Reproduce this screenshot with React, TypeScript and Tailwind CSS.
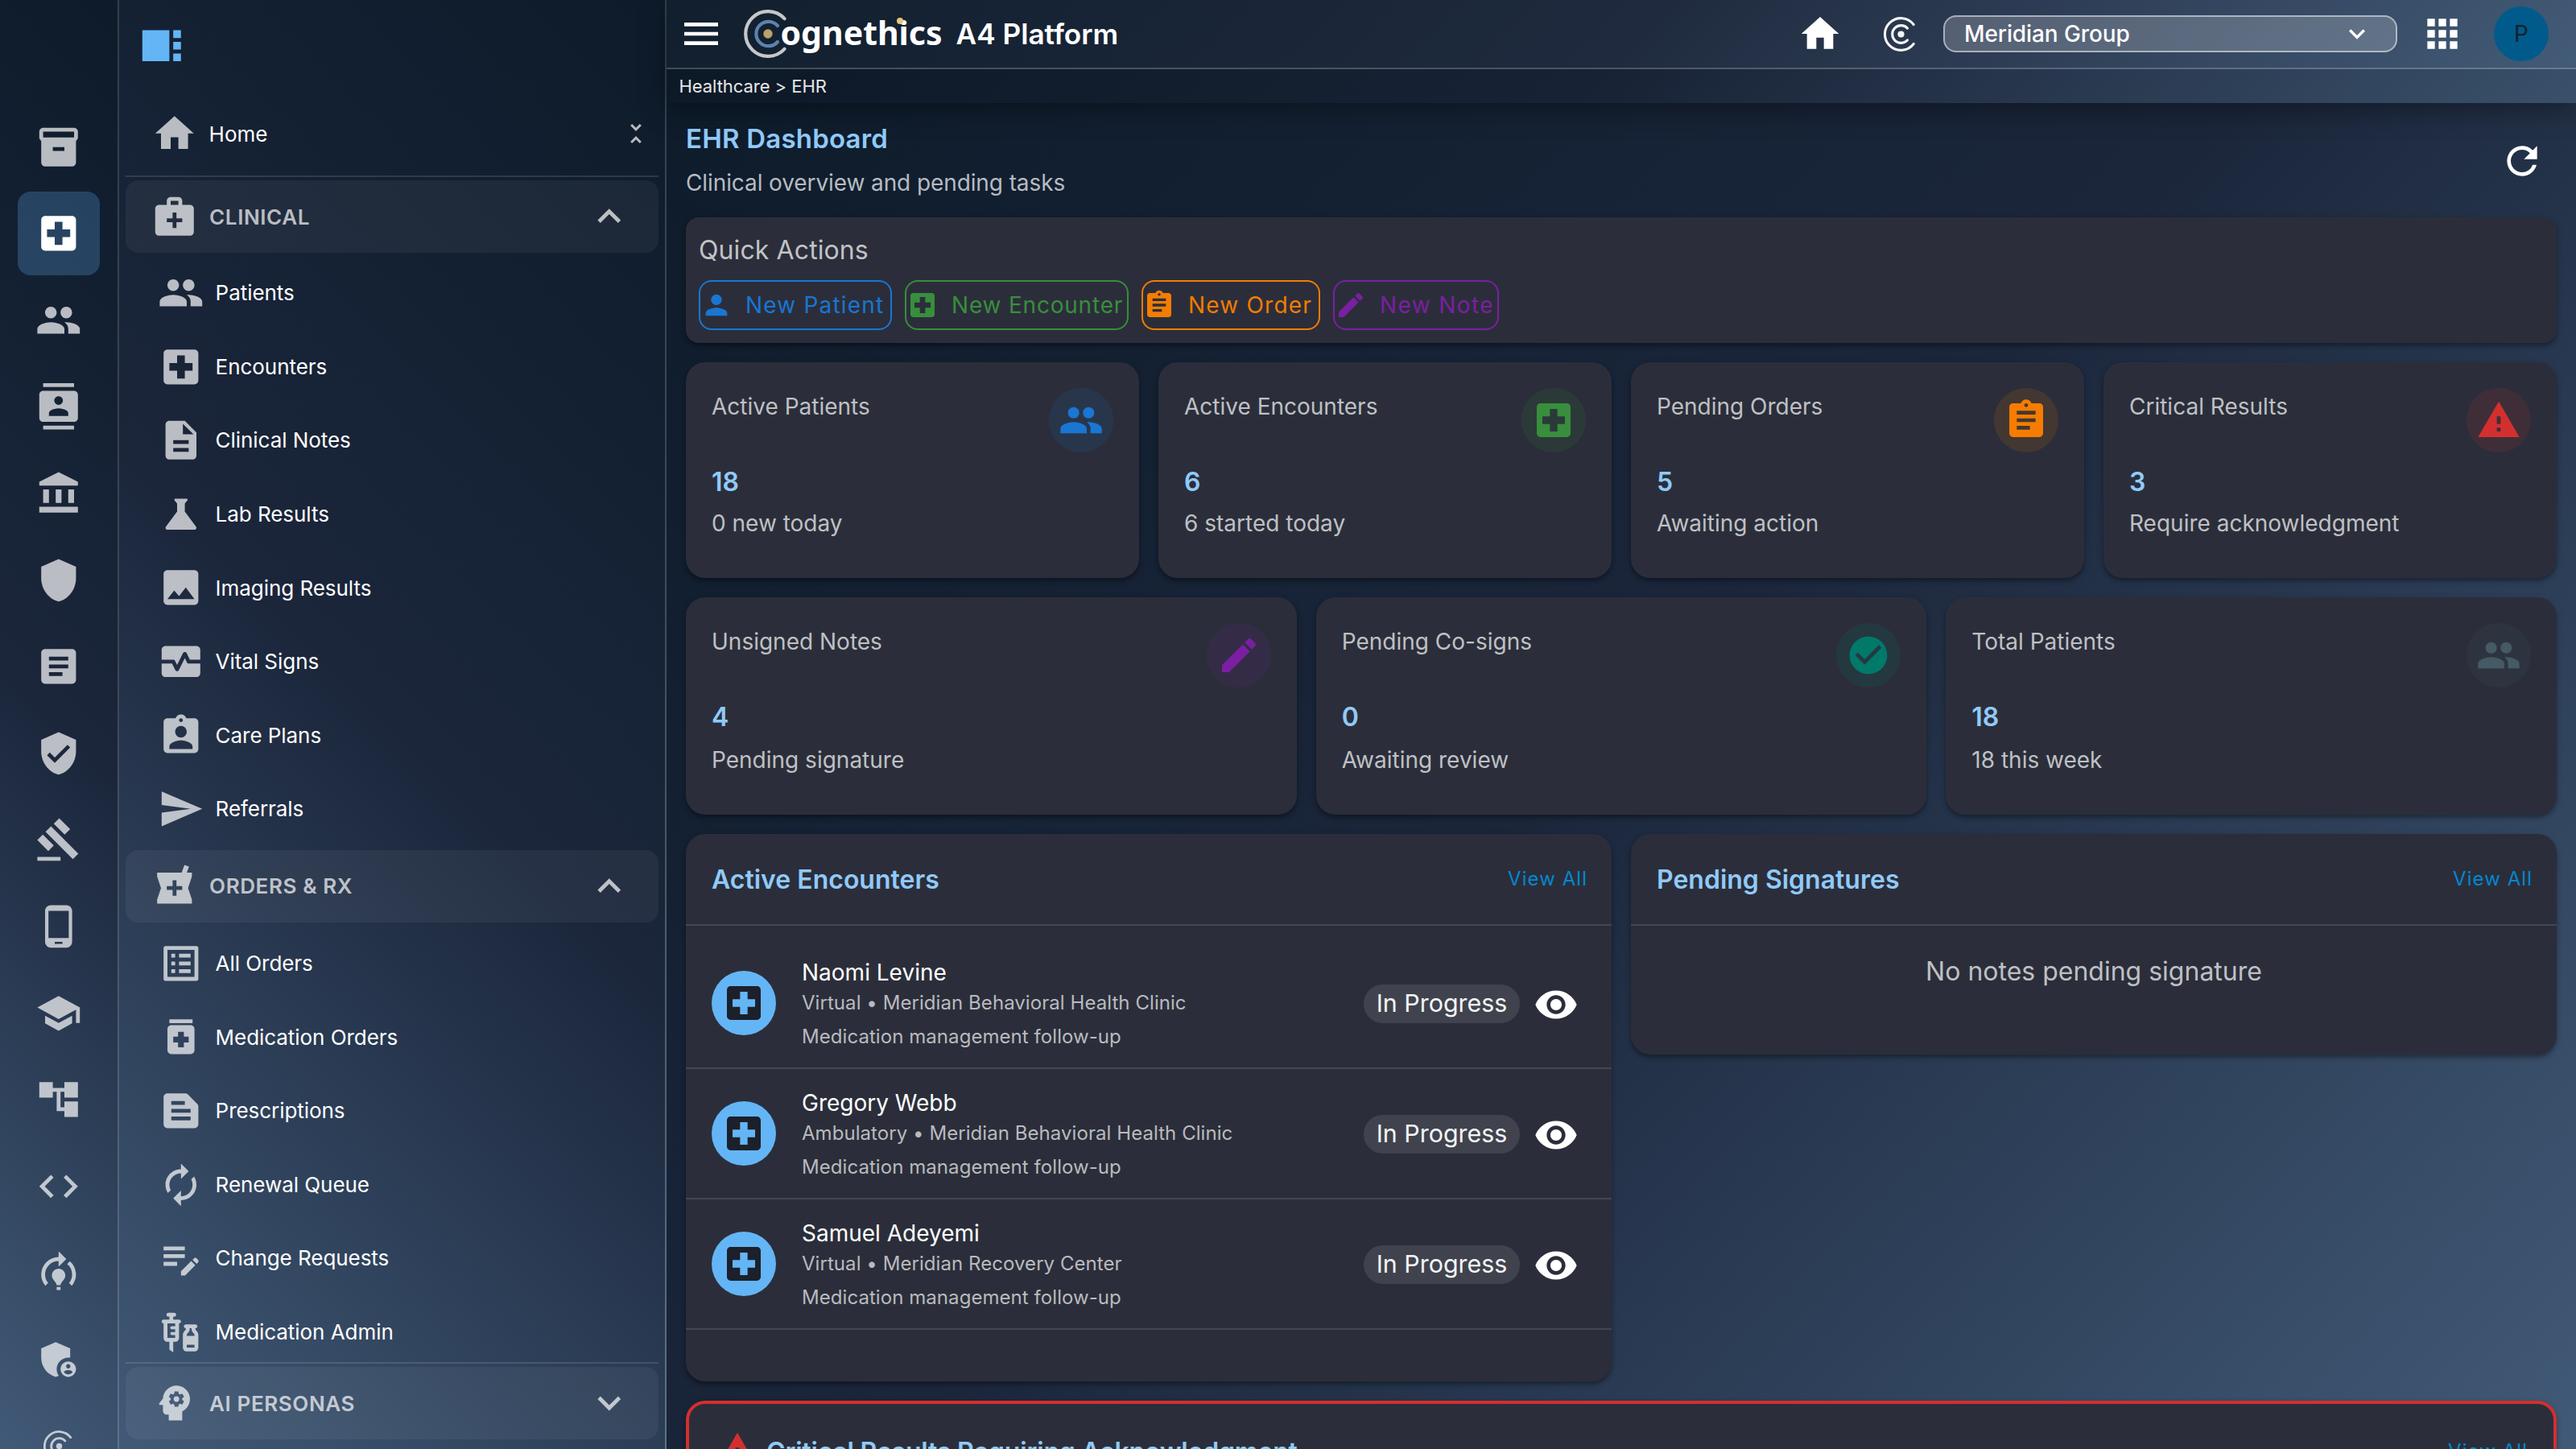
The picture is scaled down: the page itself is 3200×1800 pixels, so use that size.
import type { ReactNode } from "react";
import type { IconType } from "react-icons";
import {
  MdAccountBalance,
  MdAccountTree,
  MdAdminPanelSettings,
  MdApps,
  MdArticle,
  MdAssignment,
  MdAssignmentInd,
  MdAutorenew,
  MdCheckCircle,
  MdCode,
  MdContacts,
  MdDescription,
  MdEdit,
  MdEditNote,
  MdExpandLess,
  MdExpandMore,
  MdGavel,
  MdHome,
  MdImage,
  MdInventory2,
  MdListAlt,
  MdLocalHospital,
  MdLocalPharmacy,
  MdMedicalServices,
  MdMedication,
  MdMenu,
  MdModelTraining,
  MdMonitorHeart,
  MdPeople,
  MdPerson,
  MdPhoneAndroid,
  MdPsychology,
  MdRefresh,
  MdSchool,
  MdScience,
  MdSend,
  MdShield,
  MdTextSnippet,
  MdUnfoldLess,
  MdVaccines,
  MdVerifiedUser,
  MdViewSidebar,
  MdVisibility,
  MdWarning,
} from "react-icons/md";

// ----- Data -----

const RAIL_ICONS: IconType[] = [
  MdInventory2,
  MdLocalHospital,
  MdPeople,
  MdContacts,
  MdAccountBalance,
  MdShield,
  MdArticle,
  MdVerifiedUser,
  MdGavel,
  MdPhoneAndroid,
  MdSchool,
  MdAccountTree,
  MdCode,
  MdModelTraining,
  MdAdminPanelSettings,
];

const CLINICAL: { label: string; icon: IconType }[] = [
  { label: "Patients", icon: MdPeople },
  { label: "Encounters", icon: MdLocalHospital },
  { label: "Clinical Notes", icon: MdDescription },
  { label: "Lab Results", icon: MdScience },
  { label: "Imaging Results", icon: MdImage },
  { label: "Vital Signs", icon: MdMonitorHeart },
  { label: "Care Plans", icon: MdAssignmentInd },
  { label: "Referrals", icon: MdSend },
];

const ORDERS: { label: string; icon: IconType }[] = [
  { label: "All Orders", icon: MdListAlt },
  { label: "Medication Orders", icon: MdMedication },
  { label: "Prescriptions", icon: MdTextSnippet },
  { label: "Renewal Queue", icon: MdAutorenew },
  { label: "Change Requests", icon: MdEditNote },
  { label: "Medication Admin", icon: MdVaccines },
];

const ACTIONS = [
  { label: "New Patient", icon: MdPerson, tone: "w-[240px] border-[#1976d2] text-[#1976d2] tracking-[1.2px]" },
  { label: "New Encounter", icon: MdLocalHospital, tone: "w-[278px] border-[#388e3c] text-[#388e3c] tracking-[0.8px]" },
  { label: "New Order", icon: MdAssignment, tone: "w-[222px] border-[#f57c00] text-[#f57c00] tracking-[1.2px]" },
  { label: "New Note", icon: MdEdit, tone: "w-[206px] border-[#7b1fa2] text-[#7b1fa2] tracking-[1.4px]" },
];

const STATS_TOP = [
  { label: "Active Patients", value: "18", note: "0 new today", icon: MdPeople, tone: "bg-[#1976d2]/12 text-[#1976d2]" },
  { label: "Active Encounters", value: "6", note: "6 started today", icon: MdLocalHospital, tone: "bg-[#388e3c]/12 text-[#388e3c]" },
  { label: "Pending Orders", value: "5", note: "Awaiting action", icon: MdAssignment, tone: "bg-[#f57c00]/12 text-[#f57c00]" },
  { label: "Critical Results", value: "3", note: "Require acknowledgment", icon: MdWarning, tone: "bg-[#d32f2f]/12 text-[#d32f2f]" },
];

const STATS_BOTTOM = [
  { label: "Unsigned Notes", value: "4", note: "Pending signature", icon: MdEdit, tone: "bg-[#7b1fa2]/12 text-[#7b1fa2]" },
  { label: "Pending Co-signs", value: "0", note: "Awaiting review", icon: MdCheckCircle, tone: "bg-[#00796b]/14 text-[#00796b]" },
  { label: "Total Patients", value: "18", note: "18 this week", icon: MdPeople, tone: "bg-[#455a64]/14 text-[#455a64]" },
];

const ENCOUNTERS = [
  { name: "Naomi Levine", place: "Virtual • Meridian Behavioral Health Clinic" },
  { name: "Gregory Webb", place: "Ambulatory • Meridian Behavioral Health Clinic" },
  { name: "Samuel Adeyemi", place: "Virtual • Meridian Recovery Center" },
];

// ----- Brand marks -----

// Two nested open rings round a dot.
function RingsIcon({ className }: { className: string }) {
  return (
    <svg viewBox="0 0 42 42" className={className} fill="none" stroke="currentColor" strokeWidth="3" strokeLinecap="round">
      <path d="M36.3 9.3A19.4 19.4 0 1 0 36.3 32.7" />
      <path d="M28.9 13.9A10.6 10.6 0 1 0 28.9 28.1" />
      <circle cx="21" cy="21" r="4" fill="currentColor" stroke="none" />
    </svg>
  );
}

function Logo() {
  return (
    <div className="flex h-[60px] items-center">
      <svg viewBox="0 0 60 60" className="size-[60px]" fill="none" strokeWidth="4.2" strokeLinecap="round">
        <path d="M50.5 11.2A27.8 27.8 0 1 0 50.5 48.8" stroke="#c6c7ca" />
        <path d="M42 20A15.2 15.2 0 1 0 42 40" stroke="#5b83ad" />
        <circle cx="30" cy="30" r="5.7" fill="#b9a36c" />
      </svg>
      <span className="relative -mt-[4px] -ml-[14.5px] font-['Noto_Sans'] text-[41px] leading-[60px] font-bold text-white">
        ognethics
        <span className="absolute top-[12px] left-[144px] size-[8px] rounded-full bg-[#e9c77b]" />
      </span>
    </div>
  );
}

// ----- Navigation -----

function Rail() {
  return (
    <nav className="flex w-[148px] shrink-0 flex-col items-center overflow-hidden border-r-2 border-white/15 bg-[linear-gradient(225deg,#0d1b2a_0%,#1b263b_50%,#415a77_100%)] pt-[130.6px]">
      {RAIL_ICONS.map((Icon, i) => (
        <div
          key={i}
          className={
            i === 1
              ? "mb-1 flex h-[103.6px] w-[102px] shrink-0 items-center justify-center rounded-2xl bg-[#64b5f6]/25 text-white"
              : "mb-1 flex h-[103.6px] w-[102px] shrink-0 items-center justify-center text-white/70"
          }
        >
          <Icon className="size-[57.6px]" />
        </div>
      ))}
      <div className="flex h-[103.6px] shrink-0 items-center justify-center text-white/70">
        <RingsIcon className="size-[39px]" />
      </div>
    </nav>
  );
}

function SectionHeader({ label, icon: Icon, open }: { label: string; icon: IconType; open: boolean }) {
  const Chevron = open ? MdExpandLess : MdExpandMore;
  return (
    <div className="flex h-[90px] shrink-0 items-center rounded-2xl bg-white/5 px-8 text-white/70">
      <Icon className="size-[57.6px]" />
      <span className="ml-[14.5px] flex-1 text-[26px] font-semibold tracking-[0.6px]">{label}</span>
      <Chevron className="size-[57.6px]" />
    </div>
  );
}

function NavItem({ label, icon: Icon }: { label: string; icon: IconType }) {
  return (
    <div className="flex h-[91.6px] shrink-0 items-center pl-10 text-white">
      <Icon className="size-[57.6px] text-white/70" />
      <span className="ml-[14px] text-[26px] tracking-[-0.05px]">{label}</span>
    </div>
  );
}

function Sidebar() {
  return (
    <aside className="flex w-[680px] shrink-0 flex-col border-r-2 border-white/15 bg-[linear-gradient(225deg,#0d1b2a_0%,#1b263b_50%,#415a77_100%)] px-2 pb-[12px]">
      <div className="flex h-[114px] shrink-0 items-center pl-4">
        <MdViewSidebar className="size-[57.6px] text-[#64b5f6]" />
      </div>
      <div className="flex h-[104px] shrink-0 items-center pr-2.5 pl-8">
        <MdHome className="size-[57.6px] text-white/70" />
        <span className="ml-[14px] flex-1 text-[26px] text-white">Home</span>
        <MdUnfoldLess className="size-9 text-white/70" />
      </div>
      <div className="h-0.5 shrink-0 bg-white/12" />
      <div className="flex min-h-0 flex-1 flex-col overflow-hidden pt-1">
        <SectionHeader label="CLINICAL" icon={MdMedicalServices} open />
        <div className="flex shrink-0 flex-col pt-1 pb-[5px]">
          {CLINICAL.map((item) => (
            <NavItem key={item.label} {...item} />
          ))}
        </div>
        <SectionHeader label="ORDERS & RX" icon={MdLocalPharmacy} open />
        <div className="flex shrink-0 flex-col pt-[5px]">
          {ORDERS.map((item) => (
            <NavItem key={item.label} {...item} />
          ))}
        </div>
      </div>
      <div className="mb-1 h-0.5 shrink-0 bg-white/12" />
      <SectionHeader label="AI PERSONAS" icon={MdPsychology} open={false} />
    </aside>
  );
}

// ----- Header -----

function TopBar() {
  return (
    <header className="relative z-10 shrink-0 bg-[linear-gradient(135deg,#0d1b2a_0%,#1b263b_50%,#415a77_100%)] shadow-[0_8px_32px_rgba(0,0,0,0.37)]">
      <div className="flex h-[86px] items-center border-b-2 border-white/20 bg-white/2 pr-[34px] pl-[15px] text-white">
        <MdMenu className="size-14" />
        <div className="ml-[25px]">
          <Logo />
        </div>
        <span className="ml-[17px] flex-1 text-[35.2px] font-semibold">A4 Platform</span>
        <MdHome className="size-14" />
        <RingsIcon className="ml-[51px] size-[43px] text-white/95" />
        <div className="ml-[31px] flex h-[46px] w-[564px] items-center justify-between rounded-2xl border-2 border-white/50 bg-white/20 pr-[28px] pl-[24px]">
          <span className="text-[28px] leading-none font-medium tracking-[-0.1px]">Meridian Group</span>
          <MdExpandMore className="size-10" />
        </div>
        <MdApps className="ml-7 size-14" />
        <div className="ml-[36px] flex size-[68px] items-center justify-center rounded-full bg-[#005b8c] text-[28px] text-[#14202e]">
          P
        </div>
      </div>
      <div className="flex h-[42px] items-center bg-black/10 pl-[15.5px] text-[22px] tracking-[-0.05px] text-white/90">
        Healthcare &gt; EHR
      </div>
    </header>
  );
}

// ----- Dashboard -----

function Card({ className, children }: { className: string; children: ReactNode }) {
  return (
    <section className={`bg-[#2b2e3a] shadow-[0_4px_4px_rgba(0,0,0,0.25),0_2px_8px_rgba(0,0,0,0.14)] ${className}`}>
      {children}
    </section>
  );
}

type Stat = (typeof STATS_TOP)[number];

function StatCard({ stat, tall }: { stat: Stat; tall?: boolean }) {
  const Icon = stat.icon;
  return (
    <Card
      className={
        tall
          ? "flex h-[270px] justify-between rounded-3xl p-8"
          : "flex h-[268px] justify-between rounded-3xl p-8"
      }
    >
      <div className="flex flex-col">
        <span className="text-[28px] leading-[46px] text-[#bfc0c4]">{stat.label}</span>
        <span className="mt-[47px] text-[32px] leading-12 font-semibold text-[#90caf9]">{stat.value}</span>
        <span className={tall ? "mt-[8px] text-[28px] leading-[42px] text-[#bfc0c4]" : "mt-[6px] text-[28px] leading-[42px] text-[#bfc0c4]"}>
          {stat.note}
        </span>
      </div>
      <div className={`flex size-20 items-center justify-center rounded-full ${stat.tone}`}>
        <Icon className="size-14" />
      </div>
    </Card>
  );
}

function ListHeader({ title }: { title: string }) {
  return (
    <div className="flex h-[114px] items-center justify-between border-b-2 border-white/12 pr-[30px] pl-8">
      <h2 className="mt-0.5 text-[32px] font-semibold text-[#90caf9]">{title}</h2>
      <span className="text-[24px] tracking-[1.05px] text-[#0288d1]">View All</span>
    </div>
  );
}

function EncounterRow({ name, place }: { name: string; place: string }) {
  return (
    <div className="flex h-[162px] items-center border-b-2 border-white/12 pr-[41px] pl-8">
      <div className="flex size-20 items-center justify-center rounded-full bg-[#64b5f6] text-[#1c202b]">
        <MdLocalHospital className="size-14" />
      </div>
      <div className="mt-[7px] ml-8 flex flex-1 flex-col">
        <span className="text-[28px] leading-[36px] text-white">{name}</span>
        <span className="text-[24px] leading-[40px] tracking-[0.06px] text-[#b9babf]">{place}</span>
        <span className="text-[24px] leading-[44px] tracking-[0.06px] text-[#b9babf]">Medication management follow-up</span>
      </div>
      <span className="mt-[1px] flex h-12 w-[194px] items-center justify-center rounded-full bg-white/10 text-[30.4px] leading-none text-[#f4f4f5]">
        In Progress
      </span>
      <MdVisibility className="mt-[3px] ml-[17px] size-14 text-white" />
    </div>
  );
}

function Dashboard() {
  return (
    <main className="flex min-h-0 flex-1 flex-col gap-6 overflow-hidden px-6 pt-[22px]">
      <div className="flex h-[96px] shrink-0 items-start justify-between pr-[15px]">
        <div className="flex flex-col">
          <h1 className="text-[33px] leading-[44px] font-semibold tracking-[0.2px] text-[#90caf9]">EHR Dashboard</h1>
          <p className="mt-[12px] text-[28px] leading-[42px] tracking-[-0.1px] text-[#b6bbc1]">Clinical overview and pending tasks</p>
        </div>
        <MdRefresh className="mt-[22px] size-14 text-white" />
      </div>

      <Card className="h-[156px] shrink-0 rounded-2xl p-4">
        <h2 className="text-[32px] leading-[50px] tracking-[0.1px] text-[#c2c3c6]">Quick Actions</h2>
        <div className="mt-3 flex gap-4">
          {ACTIONS.map(({ label, icon: Icon, tone }) => (
            <button key={label} className={`flex h-[62px] items-center rounded-2xl border-2 text-[28px] whitespace-nowrap ${tone}`}>
              <Icon className="mr-4 size-10 shrink-0" />
              {label}
            </button>
          ))}
        </div>
      </Card>

      <div className="grid shrink-0 grid-cols-4 gap-6">
        {STATS_TOP.map((stat) => (
          <StatCard key={stat.label} stat={stat} />
        ))}
      </div>

      <div className="grid shrink-0 grid-cols-3 gap-6">
        {STATS_BOTTOM.map((stat) => (
          <StatCard key={stat.label} stat={stat} tall />
        ))}
      </div>

      <div className="grid shrink-0 grid-cols-2 items-start gap-6">
        <Card className="h-[680px] rounded-3xl">
          <ListHeader title="Active Encounters" />
          <div className="pt-4">
            {ENCOUNTERS.map((row) => (
              <EncounterRow key={row.name} {...row} />
            ))}
          </div>
        </Card>
        <Card className="h-[274px] rounded-3xl">
          <ListHeader title="Pending Signatures" />
          <p className="pt-[33px] text-center text-[32px] leading-12 text-[#bfc0c4]">No notes pending signature</p>
        </Card>
      </div>

      <Card className="h-[240px] shrink-0 rounded-3xl border-4 border-[#d32f2f]">
        <div className="flex h-[118px] items-center pr-8 pl-8">
          <MdWarning className="size-14 text-[#d32f2f]" />
          <h2 className="mt-0.5 ml-2 flex-1 text-[32px] font-semibold tracking-[-0.2px] text-[#90caf9]">
            Critical Results Requiring Acknowledgment
          </h2>
          <span className="text-[24px] tracking-[1.05px] text-[#0288d1]">View All</span>
        </div>
      </Card>
    </main>
  );
}

export default function App() {
  return (
    <div className="flex h-[1800px] w-[3200px] overflow-hidden bg-[#0d1b2a] font-['Inter',sans-serif]">
      <Rail />
      <Sidebar />
      <div className="flex min-w-0 flex-1 flex-col bg-[linear-gradient(135deg,#0d1b2a_0%,#1b263b_50%,#415a77_100%)]">
        <TopBar />
        <Dashboard />
      </div>
    </div>
  );
}
